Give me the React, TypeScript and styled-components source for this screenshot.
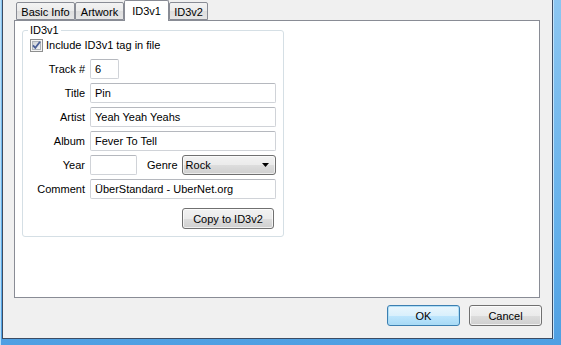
import React from 'react';
import styled, { createGlobalStyle } from 'styled-components';

const FONT = `"Liberation Sans", Arial, sans-serif`;

const Global = createGlobalStyle`
  html, body { margin: 0; padding: 0; overflow: hidden; background: #5aa8e8; }
  * { box-sizing: border-box; }
  body { font-family: ${FONT}; font-size: 11px; color: #000; }
`;

const Frame = styled.div`
  width: 561px;
  height: 345px;
  display: flex;
  padding: 0 8px 6px 2px;
  background: linear-gradient(to bottom, #8cc6f1 0%, #62afea 70%, #4f9fe2 100%);
  box-shadow: inset 1px 0 0 #b8def8;
`;

const Dialog = styled.div`
  flex: 1;
  display: flex;
  flex-direction: column;
  background: #f0f0f0;
  border: 1px solid #3c4c63;
  border-top: none;
  padding: 0 12px 0 11px;
  font-family: ${FONT};
  font-size: 11px;
  box-shadow: 1px 0 0 #c4e3fa;
`;

const TabStrip = styled.div`
  display: flex;
  align-items: flex-end;
  height: 20px;
  padding-left: 2px;
  position: relative;
  z-index: 1;
`;

const Tab = styled.div<{ $w: number; $active?: boolean }>`
  width: ${(p) => p.$w}px;
  height: ${(p) => (p.$active ? 21 : 18)}px;
  margin-bottom: ${(p) => (p.$active ? -1 : 0)}px;
  border: 1px solid #898c95;
  border-bottom: ${(p) => (p.$active ? 'none' : '1px solid #898c95')};
  border-radius: 2px 2px 0 0;
  background: ${(p) =>
    p.$active ? '#ffffff' : 'linear-gradient(to bottom, #f3f3f3 0%, #ebebeb 50%, #dedede 51%, #e6e6e6 100%)'};
  display: flex;
  align-items: center;
  justify-content: center;
  padding-top: ${(p) => (p.$active ? 0 : 1)}px;
  white-space: nowrap;
`;

const Panel = styled.div`
  height: 278px;
  border: 1px solid #898c95;
  background: #ffffff;
  padding: 3px 0 0 7px;
`;

const Group = styled.fieldset`
  margin: 0;
  width: 262px;
  min-width: 0;
  border: 1px solid #d5dfe5;
  border-radius: 3px;
  padding: 0 6px 7px 7px;
`;

const Legend = styled.legend`
  padding: 0 2px;
  margin-left: -2px;
  line-height: 13px;
  color: #000;
`;

const CheckRow = styled.label`
  display: flex;
  align-items: center;
  gap: 3px;
  height: 14px;
  margin-top: 1px;
`;

const FieldGrid = styled.div`
  display: grid;
  grid-template-columns: 55px 186px;
  column-gap: 5px;
  row-gap: 4px;
  margin-top: 7px;
  align-items: center;
`;

const Label = styled.span`
  justify-self: end;
  white-space: nowrap;
  line-height: 20px;
`;

const TextBox = styled.input<{ $w: number }>`
  width: ${(p) => p.$w}px;
  height: 20px;
  margin: 0;
  border: 1px solid #d0d3d8;
  border-top-color: #b5b8be;
  border-radius: 2px;
  padding: 0 4px;
  background: #fff;
  font-family: ${FONT};
  font-size: 11px;
  color: #000;
  outline: none;
`;

const Inline = styled.div`
  display: flex;
  align-items: center;
`;

const InlineLabel = styled.span`
  margin-left: 10px;
  margin-right: 4px;
  white-space: nowrap;
`;

const Combo = styled.div`
  flex: 1;
  height: 20px;
  border: 1px solid #707070;
  border-radius: 3px;
  background: linear-gradient(to bottom, #f2f2f2 0%, #ebebeb 50%, #dddddd 51%, #cfcfcf 100%);
  box-shadow: inset 0 0 0 1px rgba(255, 255, 255, 0.6);
  display: flex;
  align-items: center;
  justify-content: space-between;
  padding: 0 6px 0 3px;
`;

const ButtonRow = styled.div<{ $inset?: number }>`
  display: flex;
  justify-content: flex-end;
  gap: 9px;
  margin-right: ${(p) => p.$inset ?? 0}px;
`;

const CopyRow = styled(ButtonRow)`
  grid-column: 2;
  margin-top: 5px;
`;

const DialogButtons = styled(ButtonRow)`
  margin-top: 7px;
`;

const Button = styled.button<{ $w: number; $default?: boolean }>`
  width: ${(p) => p.$w}px;
  height: 21px;
  margin: 0;
  padding: 0;
  border: 1px solid ${(p) => (p.$default ? '#3c7fb1' : '#707070')};
  border-radius: 3px;
  background: ${(p) =>
    p.$default
      ? 'linear-gradient(to bottom, #eaf6fd 0%, #d9f0fc 50%, #bee6fd 51%, #a7d9f5 100%)'
      : 'linear-gradient(to bottom, #f2f2f2 0%, #ebebeb 50%, #dddddd 51%, #cfcfcf 100%)'};
  box-shadow: inset 0 0 0 1px ${(p) => (p.$default ? 'rgba(170,220,245,0.9)' : 'rgba(255,255,255,0.7)')};
  font-family: ${FONT};
  font-size: 11px;
  color: #000;
`;

const CheckBox = () => (
  <svg width="13" height="13" viewBox="0 0 13 13">
    <defs>
      <linearGradient id="cbg" x1="0" y1="0" x2="1" y2="1">
        <stop offset="0" stopColor="#cbcfd5" />
        <stop offset="1" stopColor="#f6f6f6" />
      </linearGradient>
    </defs>
    <rect x="0.5" y="0.5" width="12" height="12" fill="#f4f4f4" stroke="#8e8f8f" />
    <rect x="2.5" y="2.5" width="8" height="8" fill="url(#cbg)" stroke="#aeb3b9" />
    <path d="M3 6.3 L5.3 8.8 L10 2.8" fill="none" stroke="#4a5f98" strokeWidth="1.8" />
  </svg>
);

const Arrow = () => (
  <svg width="7" height="4" viewBox="0 0 7 4">
    <path d="M0 0 H7 L3.5 4 Z" fill="#000" />
  </svg>
);

export default function App() {
  return (
    <>
      <Global />
      <Frame>
        <Dialog>
          <TabStrip>
            <Tab $w={59}>Basic Info</Tab>
            <Tab $w={49}>Artwork</Tab>
            <Tab $w={45} $active>ID3v1</Tab>
            <Tab $w={39}>ID3v2</Tab>
          </TabStrip>
          <Panel>
            <Group>
              <Legend>ID3v1</Legend>
              <CheckRow>
                <CheckBox />
                <span>Include ID3v1 tag in file</span>
              </CheckRow>
              <FieldGrid>
                <Label>Track #</Label>
                <TextBox $w={29} value="6" readOnly />
                <Label>Title</Label>
                <TextBox $w={186} value="Pin" readOnly />
                <Label>Artist</Label>
                <TextBox $w={186} value="Yeah Yeah Yeahs" readOnly />
                <Label>Album</Label>
                <TextBox $w={186} value="Fever To Tell" readOnly />
                <Label>Year</Label>
                <Inline>
                  <TextBox $w={47} value="" readOnly />
                  <InlineLabel>Genre</InlineLabel>
                  <Combo>
                    <span>Rock</span>
                    <Arrow />
                  </Combo>
                </Inline>
                <Label>Comment</Label>
                <TextBox $w={186} value="ÜberStandard - UberNet.org" readOnly />
                <CopyRow $inset={2}>
                  <Button $w={92}>Copy to ID3v2</Button>
                </CopyRow>
              </FieldGrid>
            </Group>
          </Panel>
          <DialogButtons $inset={-2}>
            <Button $w={73} $default>OK</Button>
            <Button $w={73}>Cancel</Button>
          </DialogButtons>
        </Dialog>
      </Frame>
    </>
  );
}
